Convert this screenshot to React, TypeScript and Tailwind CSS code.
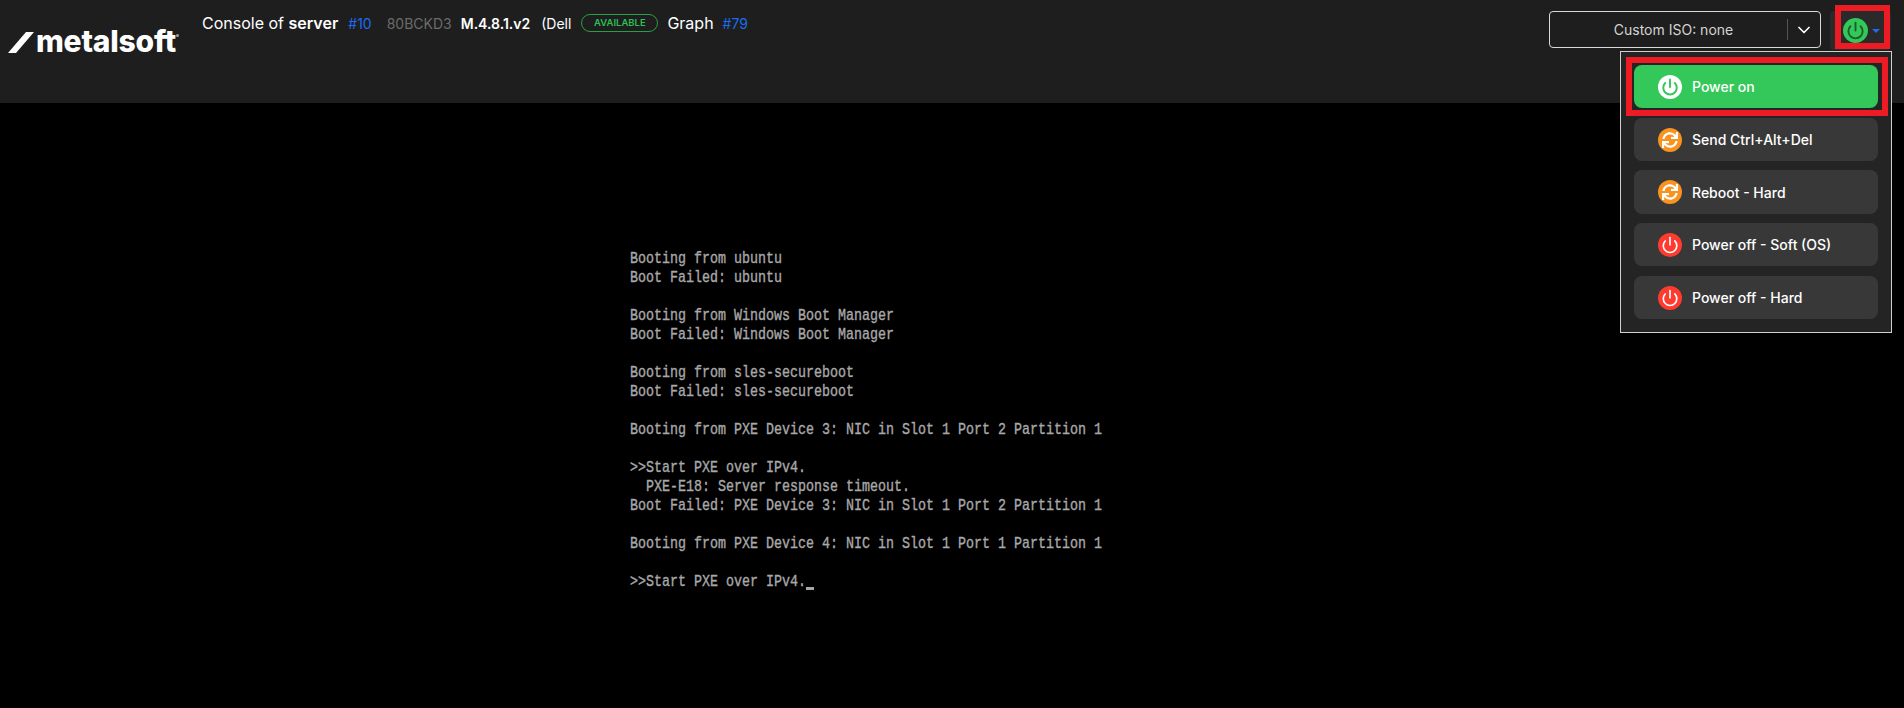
import React from 'react';
import { ChevronDown, Power } from 'lucide-react';
import { FaSync } from 'react-icons/fa';

const bootLines = [
  'Booting from ubuntu',
  'Boot Failed: ubuntu',
  '',
  'Booting from Windows Boot Manager',
  'Boot Failed: Windows Boot Manager',
  '',
  'Booting from sles-secureboot',
  'Boot Failed: sles-secureboot',
  '',
  'Booting from PXE Device 3: NIC in Slot 1 Port 2 Partition 1',
  '',
  '>>Start PXE over IPv4.',
  '  PXE-E18: Server response timeout.',
  'Boot Failed: PXE Device 3: NIC in Slot 1 Port 2 Partition 1',
  '',
  'Booting from PXE Device 4: NIC in Slot 1 Port 1 Partition 1',
  '',
];

const menuItems = [
  { label: 'Send Ctrl+Alt+Del', kind: 'sync', spacing: 'mt-[10px] h-[43px]' },
  { label: 'Reboot - Hard', kind: 'sync', spacing: 'mt-[9px] h-[44px]' },
  { label: 'Power off - Soft (OS)', kind: 'off', spacing: 'mt-[9px] h-[43px]' },
  { label: 'Power off - Hard', kind: 'off', spacing: 'mt-[10px] h-[43px]' },
];

function Logo() {
  return (
    <div className="flex items-center w-[202px] pl-[8px] pt-[26px] shrink-0">
      <svg width="28" height="22" viewBox="0 0 28 22" className="shrink-0 mt-[3px]">
        <polygon points="0,21 8,21 26,0 18,0" fill="#fff" />
      </svg>
      <span className="text-[30px] leading-[30px] font-extrabold text-white tracking-[-0.2px]">metalsoft</span>
      <span className="w-[3px] h-[3px] rounded-full bg-gray-400 mb-[12px]" />
    </div>
  );
}

export default function App() {
  return (
    <div className="relative h-screen w-full overflow-hidden bg-black flex flex-col font-['Inter',sans-serif]">
      {/* Header */}
      <header className="h-[103px] shrink-0 bg-[#1e1e1e] flex items-start">
        <Logo />
        <div className="flex items-center h-[24px] mt-[11px] text-white whitespace-nowrap">
          <span className="text-[16px]">Console of <b className="font-semibold">server</b></span>
          <span className="text-[14px] text-[#1d6bf0] ml-[10px]">#10</span>
          <span className="text-[14px] text-[#6b6b6b] ml-[15px]">80BCKD3</span>
          <span className="text-[14px] font-semibold ml-[9px]">M.4.8.1.v2</span>
          <span className="text-[14px] ml-[11px]">(Dell</span>
          <span className="ml-[10px] h-[18px] w-[77px] justify-center rounded-full border border-[#2a9d46] text-[#2fbf55] text-[9.5px] font-semibold flex items-center">AVAILABLE</span>
          <span className="text-[16px] ml-[9px]">Graph</span>
          <span className="text-[14px] text-[#1d6bf0] ml-[9px]">#79</span>
        </div>
        <div className="ml-auto flex items-start pt-[11px] pr-[13px]">
          <div className="w-[272px] h-[37px] rounded-[4px] border border-[#d8d8d8] flex items-center text-[14px] text-[#d4d4d4]">
            <span className="flex-1 text-center pl-[10px]">Custom ISO: none</span>
            <span className="w-px h-[21px] bg-[#555]" />
            <span className="w-[32px] flex justify-center">
              <ChevronDown size={20} strokeWidth={2} color="#fff" />
            </span>
          </div>
          <div className="ml-[9px] w-[61px] h-[39px] rounded-[4px] bg-[#2a2a2a] flex items-center pl-[13px]">
            <span className="w-[25px] h-[25px] rounded-full bg-[#34c759] flex items-center justify-center">
              <Power size={19} strokeWidth={2.4} color="#1b5e2c" />
            </span>
            <span className="ml-[4px] w-0 h-0 border-x-[4px] border-x-transparent border-t-[4px] border-t-[#1d6bf0]" />
          </div>
        </div>
      </header>

      {/* Console */}
      <main className="flex-1 pl-[630px] pt-[146px] font-['Liberation_Mono',monospace] text-[13.33px] leading-[19px] text-[#a8a8a8] [-webkit-text-stroke:0.3px_#a8a8a8]">
        {bootLines.map((line, i) => (
          <div key={i} className="h-[19px] whitespace-pre scale-y-[1.25]">{line}</div>
        ))}
        <div className="h-[19px] whitespace-pre flex">
          <span className="scale-y-[1.25]">{'>>Start PXE over IPv4.'}</span>
          <span className="w-[8px] h-[3px] mt-[15px] bg-[#a8a8a8]" />
        </div>
      </main>

      {/* Power menu */}
      <div className="absolute left-[1620px] top-[51px] w-[272px] h-[282px] bg-[#242424] border border-[#d0d0d0] px-[13px] pt-[13px] flex flex-col">
        <button className="h-[43px] rounded-[8px] bg-[#34c759] flex items-center pl-[24px] text-white text-[14px] font-medium">
          <span className="w-[24px] h-[24px] rounded-full bg-white flex items-center justify-center mr-[10px]">
            <Power size={18} strokeWidth={2.6} color="#34c759" />
          </span>
          Power on
        </button>
        {menuItems.map((item) => (
          <button
            key={item.label}
            className={`${item.spacing} rounded-[8px] bg-[#383838] flex items-center pl-[24px] text-white text-[14px] font-medium`}
          >
            <span className={`w-[24px] h-[24px] rounded-full flex items-center justify-center mr-[10px] ${item.kind === 'sync' ? 'bg-[#f7931e]' : 'bg-[#ff3b30]'}`}>
              {item.kind === 'sync' ? <FaSync size={16} color="#fff" /> : <Power size={18} strokeWidth={2.2} color="#fff" />}
            </span>
            {item.label}
          </button>
        ))}
      </div>

      {/* Red annotation boxes */}
      <div className="absolute left-[1835px] top-[5px] w-[55px] h-[44px] border-[6px] border-[#ed1c24]" />
      <div className="absolute left-[1626px] top-[57px] w-[262px] h-[59px] border-[6px] border-[#ed1c24]" />
    </div>
  );
}
